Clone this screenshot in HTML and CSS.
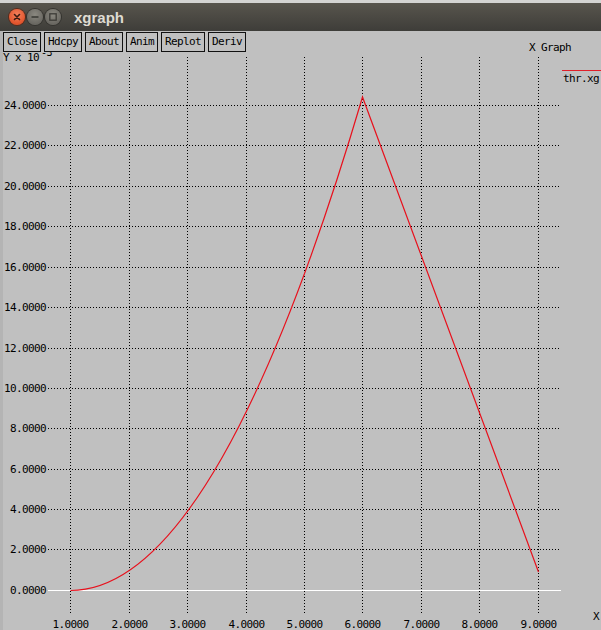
FILE: index.html
```html
<!DOCTYPE html>
<html>
<head>
<meta charset="utf-8">
<link rel="stylesheet" href="styles.css">
</head>
<body>
<div class="window">
  <header class="titlebar">
    <div class="controls">
      <span class="wbtn close"><svg width="16" height="16" viewBox="0 0 16 16"><path d="M5.5 5.5 L10.5 10.5 M10.5 5.5 L5.5 10.5" stroke="#3a1a10" stroke-width="1.6" stroke-linecap="round"/></svg></span>
      <span class="wbtn"><svg width="16" height="16" viewBox="0 0 16 16"><path d="M4.5 8 H11.5" stroke="#3c3b37" stroke-width="1.6"/></svg></span>
      <span class="wbtn"><svg width="16" height="16" viewBox="0 0 16 16"><rect x="4.8" y="4.8" width="6.4" height="6.4" fill="none" stroke="#3c3b37" stroke-width="1.3"/></svg></span>
    </div>
    <span class="title">xgraph</span>
  </header>
  <main class="canvas">
    <svg class="plot" width="601" height="599" viewBox="0 31 601 599">
      <g class="grid">
        <line x1="48" y1="105.5" x2="561" y2="105.5"/>
        <line x1="48" y1="145.5" x2="561" y2="145.5"/>
        <line x1="48" y1="186.5" x2="561" y2="186.5"/>
        <line x1="48" y1="226.5" x2="561" y2="226.5"/>
        <line x1="48" y1="267.5" x2="561" y2="267.5"/>
        <line x1="48" y1="307.5" x2="561" y2="307.5"/>
        <line x1="48" y1="348.5" x2="561" y2="348.5"/>
        <line x1="48" y1="388.5" x2="561" y2="388.5"/>
        <line x1="48" y1="428.5" x2="561" y2="428.5"/>
        <line x1="48" y1="469.5" x2="561" y2="469.5"/>
        <line x1="48" y1="509.5" x2="561" y2="509.5"/>
        <line x1="48" y1="549.5" x2="561" y2="549.5"/>
        <line x1="70.5" y1="57" x2="70.5" y2="615"/>
        <line x1="129.5" y1="57" x2="129.5" y2="615"/>
        <line x1="187.5" y1="57" x2="187.5" y2="615"/>
        <line x1="246.5" y1="57" x2="246.5" y2="615"/>
        <line x1="304.5" y1="57" x2="304.5" y2="615"/>
        <line x1="362.5" y1="57" x2="362.5" y2="615"/>
        <line x1="421.5" y1="57" x2="421.5" y2="615"/>
        <line x1="479.5" y1="57" x2="479.5" y2="615"/>
        <line x1="538.5" y1="57" x2="538.5" y2="615"/>
      </g>
      <line class="zero" x1="48" y1="590.5" x2="561" y2="590.5"/>
      <g class="ylabels">
        <text x="46" y="109">24.0000</text>
        <text x="46" y="149">22.0000</text>
        <text x="46" y="190">20.0000</text>
        <text x="46" y="230">18.0000</text>
        <text x="46" y="271">16.0000</text>
        <text x="46" y="311">14.0000</text>
        <text x="46" y="352">12.0000</text>
        <text x="46" y="392">10.0000</text>
        <text x="46" y="432">8.0000</text>
        <text x="46" y="473">6.0000</text>
        <text x="46" y="513">4.0000</text>
        <text x="46" y="553">2.0000</text>
        <text x="46" y="594">0.0000</text>
      </g>
      <g class="xlabels">
        <text x="70.5" y="628">1.0000</text>
        <text x="129.5" y="628">2.0000</text>
        <text x="187.5" y="628">3.0000</text>
        <text x="246.5" y="628">4.0000</text>
        <text x="304.5" y="628">5.0000</text>
        <text x="362.5" y="628">6.0000</text>
        <text x="421.5" y="628">7.0000</text>
        <text x="479.5" y="628">8.0000</text>
        <text x="538.5" y="628">9.0000</text>
      </g>
      <text class="lbl" x="3" y="61">Y x 10</text>
      <text class="lbl sup" x="41" y="56">-3</text>
      <text class="lbl" x="593" y="620">X</text>
      <text class="lbl" x="529" y="51">X Graph</text>
      <line class="legend" x1="562" y1="70.5" x2="601" y2="70.5"/>
      <text class="lbl" x="563" y="82">thr.xg</text>
      <path class="curve" d="M70.5 590.5 Q216.5 590.5 362.5 97 L538.5 572"/>
    </svg>
    <div class="toolbar">
      <button class="btn">Close</button>
      <button class="btn">Hdcpy</button>
      <button class="btn">About</button>
      <button class="btn">Anim</button>
      <button class="btn">Replot</button>
      <button class="btn">Deriv</button>
    </div>
  </main>
</div>
</body>
</html>
```
FILE: styles.css
```css
html, body {
  margin: 0;
  padding: 0;
  background: #c0c0c0;
  overflow: hidden;
}
.window {
  width: 601px;
  height: 630px;
  display: flex;
  flex-direction: column;
}
.titlebar {
  height: 28px;
  border-top: 3px solid #d4d4d2;
  background: linear-gradient(#58554d, #3e3d39);
  display: flex;
  align-items: center;
  padding-left: 9px;
  gap: 11px;
}
.controls {
  display: flex;
  gap: 2px;
}
.wbtn {
  width: 16px;
  height: 16px;
  border-radius: 50%;
  background: radial-gradient(circle at 50% 35%, #8a8880, #6a6862 70%);
  box-shadow: 0 0 0 1px #34332f;
  display: block;
}
.wbtn svg { display: block; }
.wbtn.close {
  background: radial-gradient(circle at 50% 35%, #f2805c, #e2532b 70%);
  box-shadow: 0 0 0 1px #5a2a1a;
}
.title {
  font-family: "Liberation Sans", Arial, sans-serif;
  font-weight: bold;
  font-size: 15px;
  color: #dfdbd2;
  margin-left: 2px;
}
.canvas {
  position: relative;
  flex: 1;
  box-shadow: inset 3px 0 0 #b4b4b4;
}
.plot {
  display: block;
}
.grid line {
  stroke: #000;
  stroke-width: 1;
  stroke-dasharray: 1 2;
}
.zero {
  stroke: #ffffff;
  stroke-width: 1;
}
.ylabels text, .xlabels text, .lbl {
  font-family: "DejaVu Sans Mono", "Liberation Mono", monospace;
  font-size: 11px;
  letter-spacing: -0.62px;
  fill: #000;
}
.ylabels text { text-anchor: end; }
.xlabels text { text-anchor: middle; }
.sup { font-size: 10px; }
.legend {
  stroke: #e0202a;
  stroke-width: 1;
}
.curve {
  fill: none;
  stroke: #e8101c;
  stroke-width: 1.2;
}
.toolbar {
  position: absolute;
  top: 1px;
  left: 3px;
  display: flex;
  gap: 3px;
}
.btn {
  margin: 0;
  height: 20px;
  padding: 0 3px;
  border: 1px solid #111;
  background: #c0c0c0;
  font-family: "DejaVu Sans Mono", "Liberation Mono", monospace;
  font-size: 11px;
  letter-spacing: -0.62px;
  color: #000;
  border-radius: 0;
  line-height: 18px;
}
```
